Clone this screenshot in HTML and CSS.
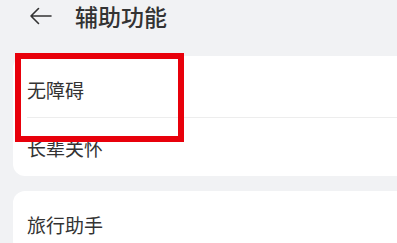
FILE: index.html
```html
<!DOCTYPE html>
<html lang="zh-CN">
<head>
    <meta charset="UTF-8">
    <meta name="viewport" content="width=device-width, initial-scale=1.0">
    <title>辅助功能</title>
    <link rel="stylesheet" href="styles.css">
</head>
<body>
    <div class="header">
        <svg class="back" width="24" height="18" viewBox="0 0 24 18">
            <path d="M22 9H2M9.5 1.5L2 9l7.5 7.5" fill="none" stroke="#333" stroke-width="1.6" stroke-linecap="round" stroke-linejoin="round"/>
        </svg>
        <h1>辅助功能</h1>
    </div>

    <div class="card">
        <div class="row divided">无障碍</div>
        <div class="row">长辈关怀</div>
    </div>
    <div class="card">
        <div class="row">旅行助手</div>
    </div>

    <div class="highlight"></div>
</body>
</html>
```

FILE: styles.css
```css
body {
    margin: 0;
    padding: 0;
    background-color: #f1f2f4;
    font-family: "Noto Sans CJK SC", "Noto Sans", sans-serif;
    color: #333;
    overflow: hidden;
    width: 397px;
    height: 243px;
    position: relative;
}
.header {
    display: flex;
    align-items: center;
    height: 28px;
    padding: 2px 0 0 29px;
}
.back {
    display: block;
}
.header h1 {
    margin: 0 0 0 22px;
    font-size: 23px;
    font-weight: 500;
    line-height: 28px;
    color: #333;
}
.card {
    background-color: #fff;
    border-radius: 12px;
    margin: 0 -20px 15px 13px;
    padding: 4px 0 0 14px;
}
.header + .card {
    margin-top: 26px;
}
.row {
    font-size: 19px;
    line-height: 26px;
    padding: 17px 0 15px;
}
.row.divided {
    padding-bottom: 14px;
    border-bottom: 1px solid #ededed;
}
.highlight {
    position: absolute;
    left: 15px;
    top: 53px;
    width: 157px;
    height: 77px;
    border: 6px solid #e8000b;
}
```
